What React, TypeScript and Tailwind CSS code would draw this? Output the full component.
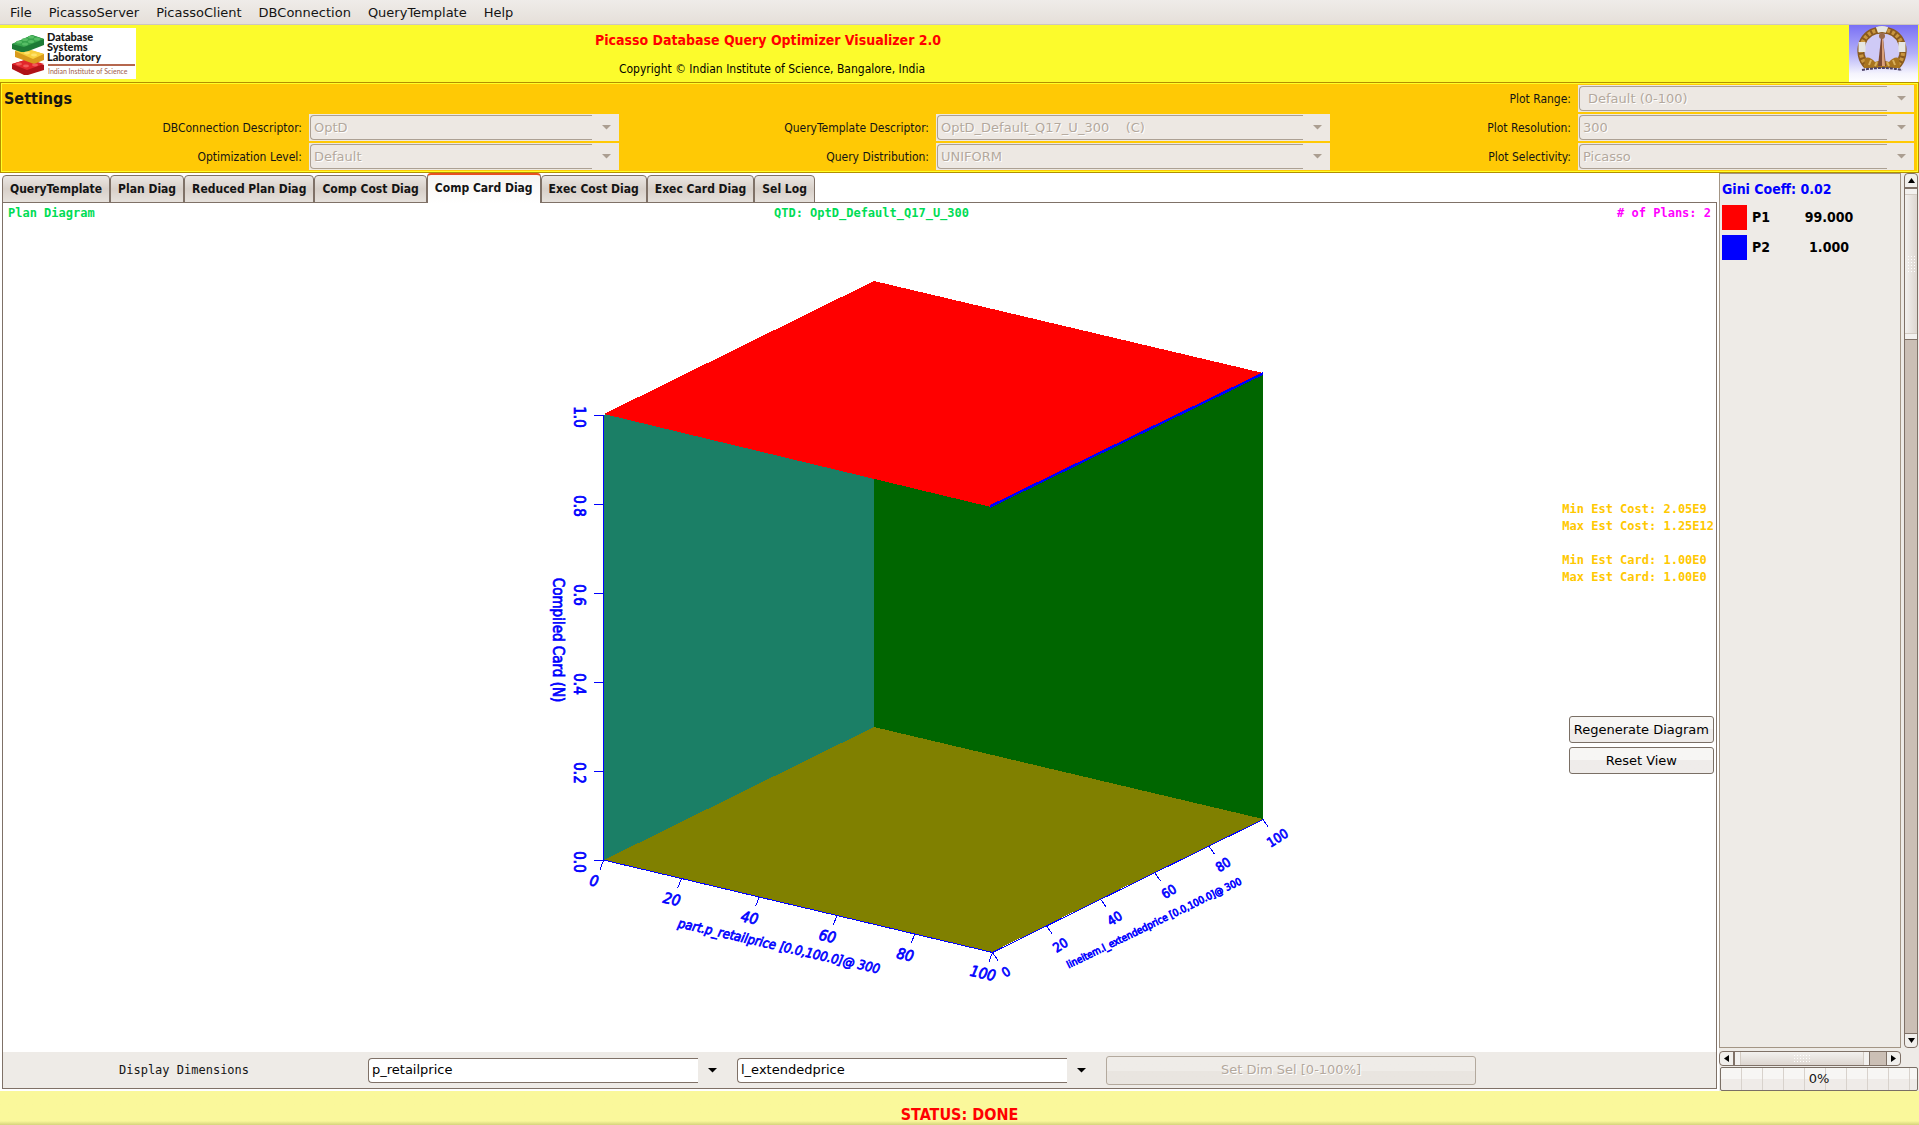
import React from 'react';

const menuItems = ['File', 'PicassoServer', 'PicassoClient', 'DBConnection', 'QueryTemplate', 'Help'];

const tabs = [
  'QueryTemplate',
  'Plan Diag',
  'Reduced Plan Diag',
  'Comp Cost Diag',
  'Comp Card Diag',
  'Exec Cost Diag',
  'Exec Card Diag',
  'Sel Log',
];

const activeTab = 'Comp Card Diag';

const plans = [
  { name: 'P1', share: '99.000', swatch: 'bg-[#ff0000]' },
  { name: 'P2', share: '1.000', swatch: 'bg-[#0000ff]' },
];

const LabLogo = () => (
  <svg className="mt-[3px] h-[51px] w-[136px] shrink-0 bg-white" viewBox="0 0 136 51" role="img" aria-label="Database Systems Laboratory">
    <path d="M12 36 L28 31 L44 37 L44 42 L28 47 L24 47 L12 41 Z" fill="#b01218" />
    <path d="M12 36 L28 31 L44 36 L27 42 Z" fill="#e2262b" />
    <path d="M15 23 L22 20 L44 26 L44 32 L34 36 L15 29 Z" fill="#d89a1c" />
    <path d="M15 23 L25 20 L44 26 L33 31 Z" fill="#f8cf3c" />
    <path d="M12 16 L32 7 L44 11 L44 17 L26 24 L21 24 L12 21 Z" fill="#1d7a36" />
    <path d="M12 16 L32 7 L44 11 L24 19 Z" fill="#37a34c" />
    <g fill="#57bd66">
      <ellipse cx="19" cy="14" rx="3" ry="1.5" />
      <ellipse cx="25" cy="11.5" rx="3" ry="1.5" />
      <ellipse cx="31" cy="9" rx="3" ry="1.5" />
      <ellipse cx="37" cy="11" rx="3" ry="1.5" />
      <ellipse cx="31" cy="13.5" rx="3" ry="1.5" />
      <ellipse cx="25" cy="16" rx="3" ry="1.5" />
    </g>
    <g fill="#ffe26b">
      <ellipse cx="27" cy="25" rx="3" ry="1.4" />
      <ellipse cx="34" cy="27" rx="3" ry="1.4" />
    </g>
    <g fill="#f25a5a">
      <ellipse cx="19" cy="36" rx="3" ry="1.4" />
      <ellipse cx="26" cy="38" rx="3" ry="1.4" />
      <ellipse cx="35" cy="37" rx="3" ry="1.4" />
    </g>
    <g fontFamily="Lato, 'DejaVu Sans', sans-serif" fontWeight="900" fontSize="11" fill="#161616">
      <text x="47" y="13">Database</text>
      <text x="47" y="23">Systems</text>
      <text x="47" y="33">Laboratory</text>
    </g>
    <rect x="48" y="36" width="87" height="2" fill="#b5674e" />
    <text x="48" y="46" fontFamily="Lato, 'DejaVu Sans', sans-serif" fontSize="7" fill="#a0604c">Indian Institute of Science</text>
  </svg>
);

const InstituteEmblem = () => (
  <svg className="h-[57px] w-[69px] shrink-0" viewBox="0 0 69 57" role="img" aria-label="Indian Institute of Science">
    <defs>
      <linearGradient id="sky" x1="0" y1="0" x2="0" y2="1">
        <stop offset="0" stopColor="#7a70f5" />
        <stop offset="0.5" stopColor="#b3b0f8" />
        <stop offset="0.85" stopColor="#f4f3fd" />
        <stop offset="1" stopColor="#ffffff" />
      </linearGradient>
    </defs>
    <rect width="69" height="57" fill="url(#sky)" />
    <ellipse cx="33" cy="23" rx="18" ry="18" fill="#cfcaf6" />
    <path d="M18 41 C6 29 12 5 33 5 C54 5 60 29 48 41" fill="none" stroke="#8a5a1e" strokeWidth="7" />
    <path d="M18 41 C6 29 12 5 33 5 C54 5 60 29 48 41" fill="none" stroke="#c9963f" strokeWidth="4" strokeDasharray="3 2" />
    <path d="M28 5 Q33 3 38 5" fill="none" stroke="#e6e6e2" strokeWidth="6" />
    <path d="M13 17 L13 27 M53 17 L53 27" stroke="#e6e6e2" strokeWidth="7" />
    <path d="M15 43 L16 33 Q21 31 26 37 L33 35 L40 37 Q45 31 50 33 L51 43 Z" fill="#a8741f" />
    <path d="M20 40 L22 35 M26 41 L28 37 M40 41 L38 37 M46 40 L44 35" stroke="#d9b05c" strokeWidth="2" />
    <path d="M32 13 L34 13 L37 41 L29 41 Z" fill="#7d4a33" />
    <path d="M33 13 L34 13 L36 41 L33 41 Z" fill="#d9a07a" />
    <circle cx="33" cy="11" r="3" fill="#9a6a4a" />
    <path d="M13 45 Q33 41 53 45" fill="none" stroke="#4c4266" strokeWidth="2" strokeDasharray="3 1" />
  </svg>
);

interface ComboProps {
  id: string;
  value: string;
  label?: string;
  disabled?: boolean;
  inset?: boolean;
}

const Combo = ({ id, value, label, disabled, inset }: ComboProps) => (
  <div className={`flex h-[27px] min-w-0 ${disabled ? 'bg-[#ede8e3]' : ''}`}>
    <select
      id={id}
      aria-label={label}
      disabled={disabled}
      className={`my-px ml-px min-w-0 flex-1 appearance-none rounded-l border-y border-l text-[13px] leading-4 ${
        inset ? 'pl-2' : 'pl-[3px]'
      } ${
        disabled
          ? 'border-[#aca093] bg-[#ede8e3] text-[#b3a89d] opacity-100 [text-shadow:1px_1px_0_white]'
          : 'border-[#7f7167] bg-white text-black'
      }`}
    >
      <option>{value}</option>
    </select>
    <svg className="mt-px h-6 w-[27px] shrink-0" viewBox="0 0 27 24" aria-hidden="true">
      <path d="M10 10 H19 L14.5 14.5 Z" fill={disabled ? '#ab9e91' : '#000'} />
    </svg>
  </div>
);

const FieldLabel = ({ htmlFor, children }: { htmlFor: string; children: React.ReactNode }) => (
  <label
    htmlFor={htmlFor}
    className="self-center text-right font-['DejaVu_Sans_Condensed','DejaVu_Sans',sans-serif] text-[12px] font-stretch-condensed"
  >
    {children}
  </label>
);

const Settings = () => (
  <section className="border border-[#b38f00] bg-[#ffff28] p-px">
    <div className="grid grid-cols-[300fr_310fr_303fr_394fr_234fr_336fr] gap-x-[7px] gap-y-[2px] bg-[#ffc905] pt-px pr-[3px] pb-px">
      <h2 className="pl-[2px] font-['DejaVu_Sans_Condensed','DejaVu_Sans',sans-serif] text-[16px] leading-[27px] font-bold font-stretch-condensed">
        Settings
      </h2>
      <div className="col-span-3" />
      <FieldLabel htmlFor="range">Plot Range:</FieldLabel>
      <Combo id="range" value="Default (0-100)" disabled inset />

      <FieldLabel htmlFor="db">DBConnection Descriptor:</FieldLabel>
      <Combo id="db" value="OptD" disabled />
      <FieldLabel htmlFor="qtd">QueryTemplate Descriptor:</FieldLabel>
      <Combo id="qtd" value={'OptD_Default_Q17_U_300\u00a0\u00a0\u00a0 (C)'} disabled />
      <FieldLabel htmlFor="resolution">Plot Resolution:</FieldLabel>
      <Combo id="resolution" value="300" disabled />

      <FieldLabel htmlFor="level">Optimization Level:</FieldLabel>
      <Combo id="level" value="Default" disabled />
      <FieldLabel htmlFor="distribution">Query Distribution:</FieldLabel>
      <Combo id="distribution" value="UNIFORM" disabled />
      <FieldLabel htmlFor="selectivity">Plot Selectivity:</FieldLabel>
      <Combo id="selectivity" value="Picasso" disabled />
    </div>
  </section>
);

const steps = [0, 1, 2, 3, 4, 5];

const CardDiagram = () => (
  <svg className="h-[829px] w-[880px]" viewBox="420 223 880 829" role="img" aria-label="Compiled cardinality diagram">
    <g shapeRendering="crispEdges">
      <polygon points="604,415 874,282 874,727 604,860" fill="#1b7f66" />
      <polygon points="874,282 1263,374 1263,819 874,727" fill="#006600" />
      <polygon points="604,860 874,727 1263,819 992,952" fill="#808000" />
      <polygon points="604,414 874,281 1263,373 991,507" fill="#ff0000" />
      <path d="M990 506.5 L1263 373.5" stroke="#0000ff" strokeWidth="2.4" />
      <path d="M603.5 415 V860 L992.5 952.5 L1263 819.5" fill="none" stroke="#0000ff" />
    </g>
    <g stroke="#0000ff" shapeRendering="crispEdges">
      {steps.map((i) => (
        <React.Fragment key={i}>
          <path d={`M594 ${860.5 - i * 89} h10`} />
          <path d={`M${603.5 + i * 77.8} ${860.5 + i * 18.4} l-3.5 9`} />
          <path d={`M${992.5 + i * 54.1} ${952.5 - i * 26.6} l5.5 8`} />
        </React.Fragment>
      ))}
    </g>
    <g
      className="font-['DejaVu_Sans_Condensed','DejaVu_Sans',sans-serif] font-stretch-condensed"
      fill="#0000ff"
      stroke="#0000ff"
      strokeWidth="0.7"
      textAnchor="middle"
      dominantBaseline="central"
      fontSize="15"
    >
      {steps.map((i) => (
        <React.Fragment key={i}>
          <text transform={`translate(579 ${862 - i * 89}) rotate(90)`}>{(i / 5).toFixed(1)}</text>
          <text fontStyle="italic" transform={`translate(${594 + i * 77.8} ${881 + i * 18.5}) rotate(13)`}>
            {i * 20}
          </text>
          <text transform={`translate(${1006 + i * 54.3} ${972 - i * 26.8}) rotate(-32)`} fontSize="13">
            {i * 20}
          </text>
        </React.Fragment>
      ))}
      <text transform="translate(558 640) rotate(90)">Compiled Card (N)</text>
      <text fontStyle="italic" transform="translate(779 946) rotate(13)" fontSize="13">
        part.p_retailprice [0.0,100.0]@ 300
      </text>
      <text transform="translate(1154 923) rotate(-26)" fontSize="10">
        lineitem.l_extendedprice [0.0,100.0]@ 300
      </text>
    </g>
  </svg>
);

const PushButton = ({ children }: { children: React.ReactNode }) => (
  <button
    type="button"
    className="h-[27px] rounded-[3px] border border-[#7a6f65] bg-linear-to-b from-[#f7f6f4] from-50% to-[#efecea] to-50% px-1 text-[13px] leading-4 text-black"
  >
    {children}
  </button>
);

const DiagramPanel = () => (
  <div className="ml-[2px] flex flex-1 flex-col border border-[#7f7167] bg-white">
    <div className="grid grid-cols-[1fr_auto_1fr] px-[5px] pt-px font-['DejaVu_Sans_Mono',monospace] text-[12px] leading-[19px] font-bold">
      <p className="text-[#00dc55]">Plan Diagram</p>
      <p className="pl-6 text-[#00dc55]">QTD: OptD_Default_Q17_U_300</p>
      <p className="text-right text-[#ff00ff]"># of Plans: 2</p>
    </div>
    <div className="grid flex-1 grid-cols-[1fr_auto_1fr] items-center">
      <div />
      <CardDiagram />
      <div className="flex flex-col items-end self-start pt-[278px] pr-[2px]">
        <div className="font-['DejaVu_Sans_Mono',monospace] text-[12px] leading-[17px] font-bold text-[#ffc800]">
          <p>Min Est Cost: 2.05E9</p>
          <p>Max Est Cost: 1.25E12</p>
          <br />
          <p>Min Est Card: 1.00E0</p>
          <p>Max Est Card: 1.00E0</p>
        </div>
        <div className="mt-[130px] flex flex-col gap-1">
          <PushButton>Regenerate Diagram</PushButton>
          <PushButton>Reset View</PushButton>
        </div>
      </div>
    </div>
    <div className="grid h-9 grid-cols-[364fr_358fr_11fr_358fr_12fr_370fr_240fr] items-center bg-[#eeebe7]">
      <p className="pl-[116px] font-['DejaVu_Sans_Mono',monospace] text-[12px]">Display Dimensions</p>
      <Combo id="dim-x" label="First dimension" value="p_retailprice" />
      <div />
      <Combo id="dim-y" label="Second dimension" value="l_extendedprice" />
      <div />
      <button
        type="button"
        disabled
        className="h-[29px] rounded-[3px] border border-[#b3a99d] bg-linear-to-b from-[#efece8] from-50% to-[#e9e5e0] to-50% text-[13px] text-[#b3a89d] [text-shadow:1px_1px_0_white]"
      >
        Set Dim Sel [0-100%]
      </button>
    </div>
  </div>
);

const Arrow = ({ d }: { d: string }) => (
  <svg className="h-[7px] w-[7px]" viewBox="0 0 7 7" aria-hidden="true">
    <path d={d} fill="#000" />
  </svg>
);

const Grip = ({ className }: { className: string }) => (
  <div className={`${className} bg-[radial-gradient(#ffffff_1px,transparent_1px)] bg-size-[3px_3px]`} />
);

const PlanPanel = () => (
  <aside className="grid w-[200px] shrink-0 grid-cols-[1fr_14px] grid-rows-[1fr_15px_auto] gap-x-[3px] bg-[#eeebe7] pr-px">
    <div className="border border-[#a39585] pt-[6px] pl-[2px] font-['DejaVu_Sans_Condensed','DejaVu_Sans',sans-serif] text-[14px] font-bold font-stretch-condensed text-black">
      <p className="leading-[18px] text-[#0000ff]">Gini Coeff: 0.02</p>
      <table className="mt-1">
        <tbody>
          {plans.map((plan) => (
            <tr key={plan.name} className="h-[30px]">
              <td className="w-[25px]">
                <div className={`h-[25px] w-[25px] ${plan.swatch}`} />
              </td>
              <td className="w-11 pl-[5px]">{plan.name}</td>
              <td className="w-[76px] text-center">{plan.share}</td>
            </tr>
          ))}
        </tbody>
      </table>
    </div>
    <div className="flex flex-col rounded border border-[#7f7167] bg-[#cbbfb5]">
      <button type="button" aria-label="Scroll up" className="flex h-[13px] items-center justify-center rounded-t bg-[#f1efec]">
        <Arrow d="M0 6 H7 L3.5 1 Z" />
      </button>
      <div className="flex h-[153px] flex-col border-t-2 border-b border-[#7f7167] bg-linear-to-r from-[#f3f1ef] to-[#ddd6d0]">
        <div className="h-[6px] border-b border-[#d3cbc3] bg-[#f3f1ef]" />
        <div className="flex flex-1 items-center justify-center">
          <Grip className="h-[18px] w-[9px]" />
        </div>
        <div className="h-[6px] border-t border-[#d3cbc3] bg-[#f3f1ef]" />
      </div>
      <div className="flex-1" />
      <button type="button" aria-label="Scroll down" className="flex h-[14px] items-center justify-center rounded-b border-t border-[#7f7167] bg-[#f1efec]">
        <Arrow d="M0 1 H7 L3.5 6 Z" />
      </button>
    </div>
    <div className="mt-[3px] flex h-[15px] rounded border border-[#7f7167] bg-[#cbbfb5]">
      <button type="button" aria-label="Scroll left" className="flex w-[13px] items-center justify-center rounded-l bg-[#f1efec]">
        <Arrow d="M6 0 V7 L1 3.5 Z" />
      </button>
      <div className="flex flex-1 items-center border-r border-l-2 border-[#7f7167] bg-linear-to-b from-[#f3f1ef] to-[#ddd6d0]">
        <div className="h-full w-[6px] border-r border-[#d3cbc3] bg-[#f3f1ef]" />
        <div className="flex flex-1 justify-center">
          <Grip className="h-[9px] w-[18px]" />
        </div>
        <div className="h-full w-[6px] border-l border-[#d3cbc3] bg-[#f3f1ef]" />
      </div>
      <div className="w-4" />
      <button type="button" aria-label="Scroll right" className="flex w-[14px] items-center justify-center rounded-r border-l border-[#7f7167] bg-[#f1efec]">
        <Arrow d="M1 0 V7 L6 3.5 Z" />
      </button>
    </div>
    <div />
    <div
      role="progressbar"
      aria-label="Progress"
      aria-valuenow={0}
      className="col-span-2 mt-1 ml-px h-[24px] rounded-[2px] border border-[#7a6f65] bg-[repeating-linear-gradient(to_right,transparent_0px,transparent_20px,#d8d2cc_20px,#d8d2cc_21px),linear-gradient(to_bottom,#f7f6f4_50%,#efebe8_50%)] text-center text-[13px] leading-[22px]"
    >
      0%
    </div>
  </aside>
);

const App = () => {
  return (
    <div className="flex min-h-screen flex-col bg-white font-['DejaVu_Sans',sans-serif] text-[#141414]">
      <nav className="flex h-[25px] items-center gap-[17px] border-b border-[#cdc6be] bg-linear-to-b from-[#efece9] to-[#e5dfd9] pt-px pl-[10px] text-[13px]">
        {menuItems.map((item) => (
          <button key={item} type="button">
            {item}
          </button>
        ))}
      </nav>

      <header className="flex h-[57px] bg-[#fcfb2c] pr-px">
        <LabLogo />
        <div className="flex-1 pt-[6px] pr-[449px] text-center font-['DejaVu_Sans_Condensed','DejaVu_Sans',sans-serif] font-stretch-condensed">
          <h1 className="text-[14px] leading-[18px] font-bold text-[#ff0000]">
            Picasso Database Query Optimizer Visualizer 2.0
          </h1>
          <p className="mt-3 pl-2 text-[12px] leading-4 text-black">
            Copyright © Indian Institute of Science, Bangalore, India
          </p>
        </div>
        <InstituteEmblem />
      </header>

      <Settings />

      <main className="flex flex-1 gap-[2px]">
        <div className="flex flex-1 flex-col pb-[2px]">
          <div role="tablist" className="-mb-px flex items-end pl-[2px]">
            {tabs.map((tab) => (
              <button
                key={tab}
                type="button"
                role="tab"
                aria-selected={tab === activeTab}
                className={`z-10 rounded-t border-x border-[#7f7167] px-[7px] font-['DejaVu_Sans_Condensed','DejaVu_Sans',sans-serif] text-[12px] font-bold font-stretch-condensed ${
                  tab === activeTab
                    ? 'h-[30px] border-t-2 border-t-[#e8501e] bg-linear-to-b from-[#f6f4f2] to-white pb-[2px]'
                    : 'h-7 border-t border-b bg-linear-to-b from-[#ebe7e3] via-[#d8d0c9] to-[#e6e1dc]'
                }`}
              >
                {tab}
              </button>
            ))}
          </div>
          <DiagramPanel />
        </div>
        <PlanPanel />
      </main>

      <footer className="h-[34px] bg-linear-to-b from-[#faf89b] from-88% to-[#d5d37c] pt-[13px] text-center font-['DejaVu_Sans_Condensed','DejaVu_Sans',sans-serif] text-[16px] leading-[21px] font-bold font-stretch-condensed text-[#ff0000]">
        STATUS: DONE
      </footer>
    </div>
  );
};

export default App;
